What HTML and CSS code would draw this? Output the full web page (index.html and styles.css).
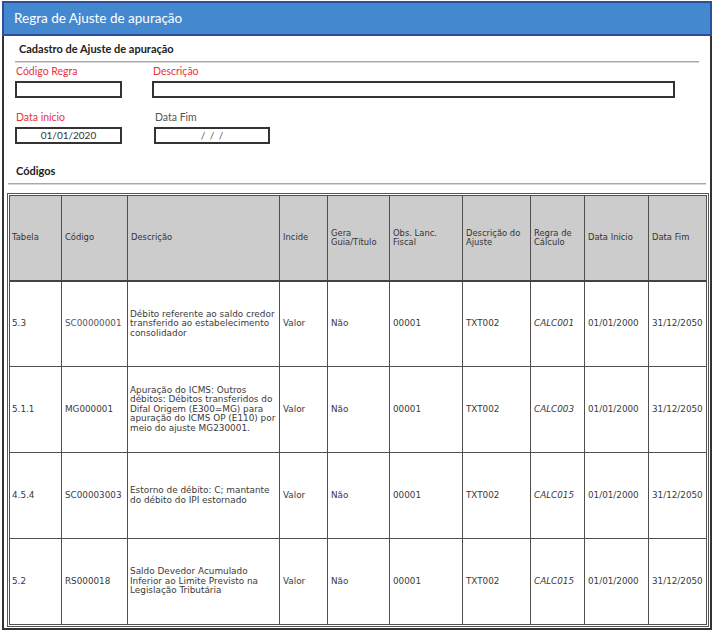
FILE: index.html
```html
<!DOCTYPE html>
<html lang="pt">
<head>
<meta charset="utf-8">
<link rel="stylesheet" href="styles.css">
</head>
<body>
<div class="frame">
  <div class="titlebar">Regra de Ajuste de apuração</div>
  <div class="form">
    <div class="section-title">Cadastro de Ajuste de apuração</div>
    <div class="rule"></div>
    <div class="row">
      <div class="field f-code">
        <div class="label req">Código Regra</div>
        <div class="input"></div>
      </div>
      <div class="field f-desc">
        <div class="label req">Descrição</div>
        <div class="input"></div>
      </div>
    </div>
    <div class="row row2">
      <div class="field f-code">
        <div class="label req">Data início</div>
        <div class="input center">01/01/2020</div>
      </div>
      <div class="field f-end">
        <div class="label">Data Fim</div>
        <div class="input center slashes">/ / /</div>
      </div>
    </div>
  </div>
  <div class="codes">
    <div class="section-title codes-title">Códigos</div>
    <div class="rule rule2"></div>
    <div class="tablewrap">
      <table class="grid">
        <colgroup>
          <col class="c1"><col class="c2"><col class="c3"><col class="c4"><col class="c5">
          <col class="c6"><col class="c7"><col class="c8"><col class="c9"><col class="c10">
        </colgroup>
        <thead>
          <tr>
            <th>Tabela</th>
            <th>Código</th>
            <th>Descrição</th>
            <th>Incide</th>
            <th>Gera<br>Guia/Título</th>
            <th>Obs. Lanc.<br>Fiscal</th>
            <th>Descrição do<br>Ajuste</th>
            <th>Regra de<br>Cálculo</th>
            <th>Data Inicio</th>
            <th>Data Fim</th>
          </tr>
        </thead>
        <tbody>
          <tr>
            <td>5.3</td>
            <td class="light">SC00000001</td>
            <td>Débito referente ao saldo credor<br>transferido ao estabelecimento<br>consolidador</td>
            <td>Valor</td>
            <td>Não</td>
            <td>00001</td>
            <td>TXT002</td>
            <td class="it">CALC001</td>
            <td>01/01/2000</td>
            <td>31/12/2050</td>
          </tr>
          <tr>
            <td>5.1.1</td>
            <td>MG000001</td>
            <td>Apuração do ICMS: Outros<br>débitos: Débitos transferidos do<br>Difal Origem (E300=MG) para<br>apuração do ICMS OP (E110) por<br>meio do ajuste MG230001.</td>
            <td>Valor</td>
            <td>Não</td>
            <td>00001</td>
            <td>TXT002</td>
            <td class="it">CALC003</td>
            <td>01/01/2000</td>
            <td>31/12/2050</td>
          </tr>
          <tr>
            <td>4.5.4</td>
            <td>SC00003003</td>
            <td>Estorno de débito: C; mantante<br>do débito do IPI estornado</td>
            <td>Valor</td>
            <td>Não</td>
            <td>00001</td>
            <td>TXT002</td>
            <td class="it">CALC015</td>
            <td>01/01/2000</td>
            <td>31/12/2050</td>
          </tr>
          <tr>
            <td>5.2</td>
            <td>RS000018</td>
            <td>Saldo Devedor Acumulado<br>Inferior ao Limite Previsto na<br>Legislação Tributária</td>
            <td>Valor</td>
            <td>Não</td>
            <td>00001</td>
            <td>TXT002</td>
            <td class="it">CALC015</td>
            <td>01/01/2000</td>
            <td>31/12/2050</td>
          </tr>
        </tbody>
      </table>
    </div>
  </div>
</div>
</body>
</html>
```

FILE: styles.css
```css
* { box-sizing: border-box; }
html, body { margin: 0; padding: 0; background: #ffffff; }
body { font-family: Lato, "Liberation Sans", sans-serif; color: #222; }

.frame {
  margin: 1px 0 0 2px;
  width: 710px;
  height: 629px;
  border-left: 2px solid #333;
  border-right: 2px solid #333;
  border-bottom: 2px solid #333;
  display: flex;
  flex-direction: column;
}

.titlebar {
  height: 35px;
  margin: 0 -2px;
  background: #4488d0;
  border: 2px solid #2c4e9c;
  color: #ffffff;
  font-size: 13.5px;
  line-height: 31px;
  padding-left: 10px;
}

.form { padding: 6px 11px 0 11px; }

.section-title {
  font-weight: 700;
  font-size: 11px;
  line-height: 14px;
  height: 14px;
  padding-left: 4px;
  color: #222;
}

.rule {
  height: 1px;
  background: #a8a8a8;
  margin-top: 5px;
  box-shadow: 0 1px 0 #d8d8d8;
}

.row { display: flex; gap: 30px; margin-top: 3px; }
.row2 { margin-top: 13px; }

.field { display: flex; flex-direction: column; }
.f-code { width: 107px; }
.f-desc { width: 523px; }
.f-end { width: 116px; margin-left: 2px; }

.label {
  font-size: 10.5px;
  line-height: 12px;
  height: 12px;
  color: #555;
  padding-left: 1px;
}
.label.req { color: #e8343c; }

.input {
  margin-top: 4px;
  height: 17px;
  border: 2px solid #333;
  font-size: 10px;
  line-height: 13px;
  color: #333;
}
.input.center { text-align: center; }
.slashes { word-spacing: 2px; color: #555; }

.codes {
  flex: 1;
  min-height: 0;
  display: flex;
  flex-direction: column;
  padding: 0 1px 0 3px;
  margin-top: 20px;
}
.codes-title { padding-left: 9px; }
.rule2 { margin: 5px 3px 0 1px; }

.tablewrap {
  flex: 1;
  min-height: 0;
  margin-top: 9px;
  margin-bottom: 1px;
  border: 1px solid #555;
  padding: 1px;
}

.grid {
  width: 100%;
  border-collapse: collapse;
  table-layout: fixed;
  font-family: "DejaVu Sans", Verdana, sans-serif;
  font-size: 8.4px;
  line-height: 9px;
  color: #3a3a3a;
}

.c1 { width: 52px; }
.c2 { width: 66px; }
.c3 { width: 152px; }
.c4 { width: 48px; }
.c5 { width: 62px; }
.c6 { width: 73px; }
.c7 { width: 68px; }
.c8 { width: 54px; }
.c9 { width: 64px; }
.c10 { width: 58px; }

.grid th, .grid td {
  border: 1px solid #505050;
  padding: 0 2px 0 3px;
  text-align: left;
  vertical-align: middle;
  white-space: nowrap;
  overflow: hidden;
}
.grid th:first-child, .grid td:first-child { padding-left: 2px; }

.grid th {
  height: 85px;
  background: #cccccc;
  font-weight: 400;
  color: #333;
  border-bottom: 2px solid #444;
}

.grid td { height: 86px; font-size: 8.8px; line-height: 9.5px; }
.grid td:nth-child(3) { font-size: 8.9px; padding-left: 2px; padding-right: 0; }
.it { font-style: italic; }
.light { color: #555; }
```
